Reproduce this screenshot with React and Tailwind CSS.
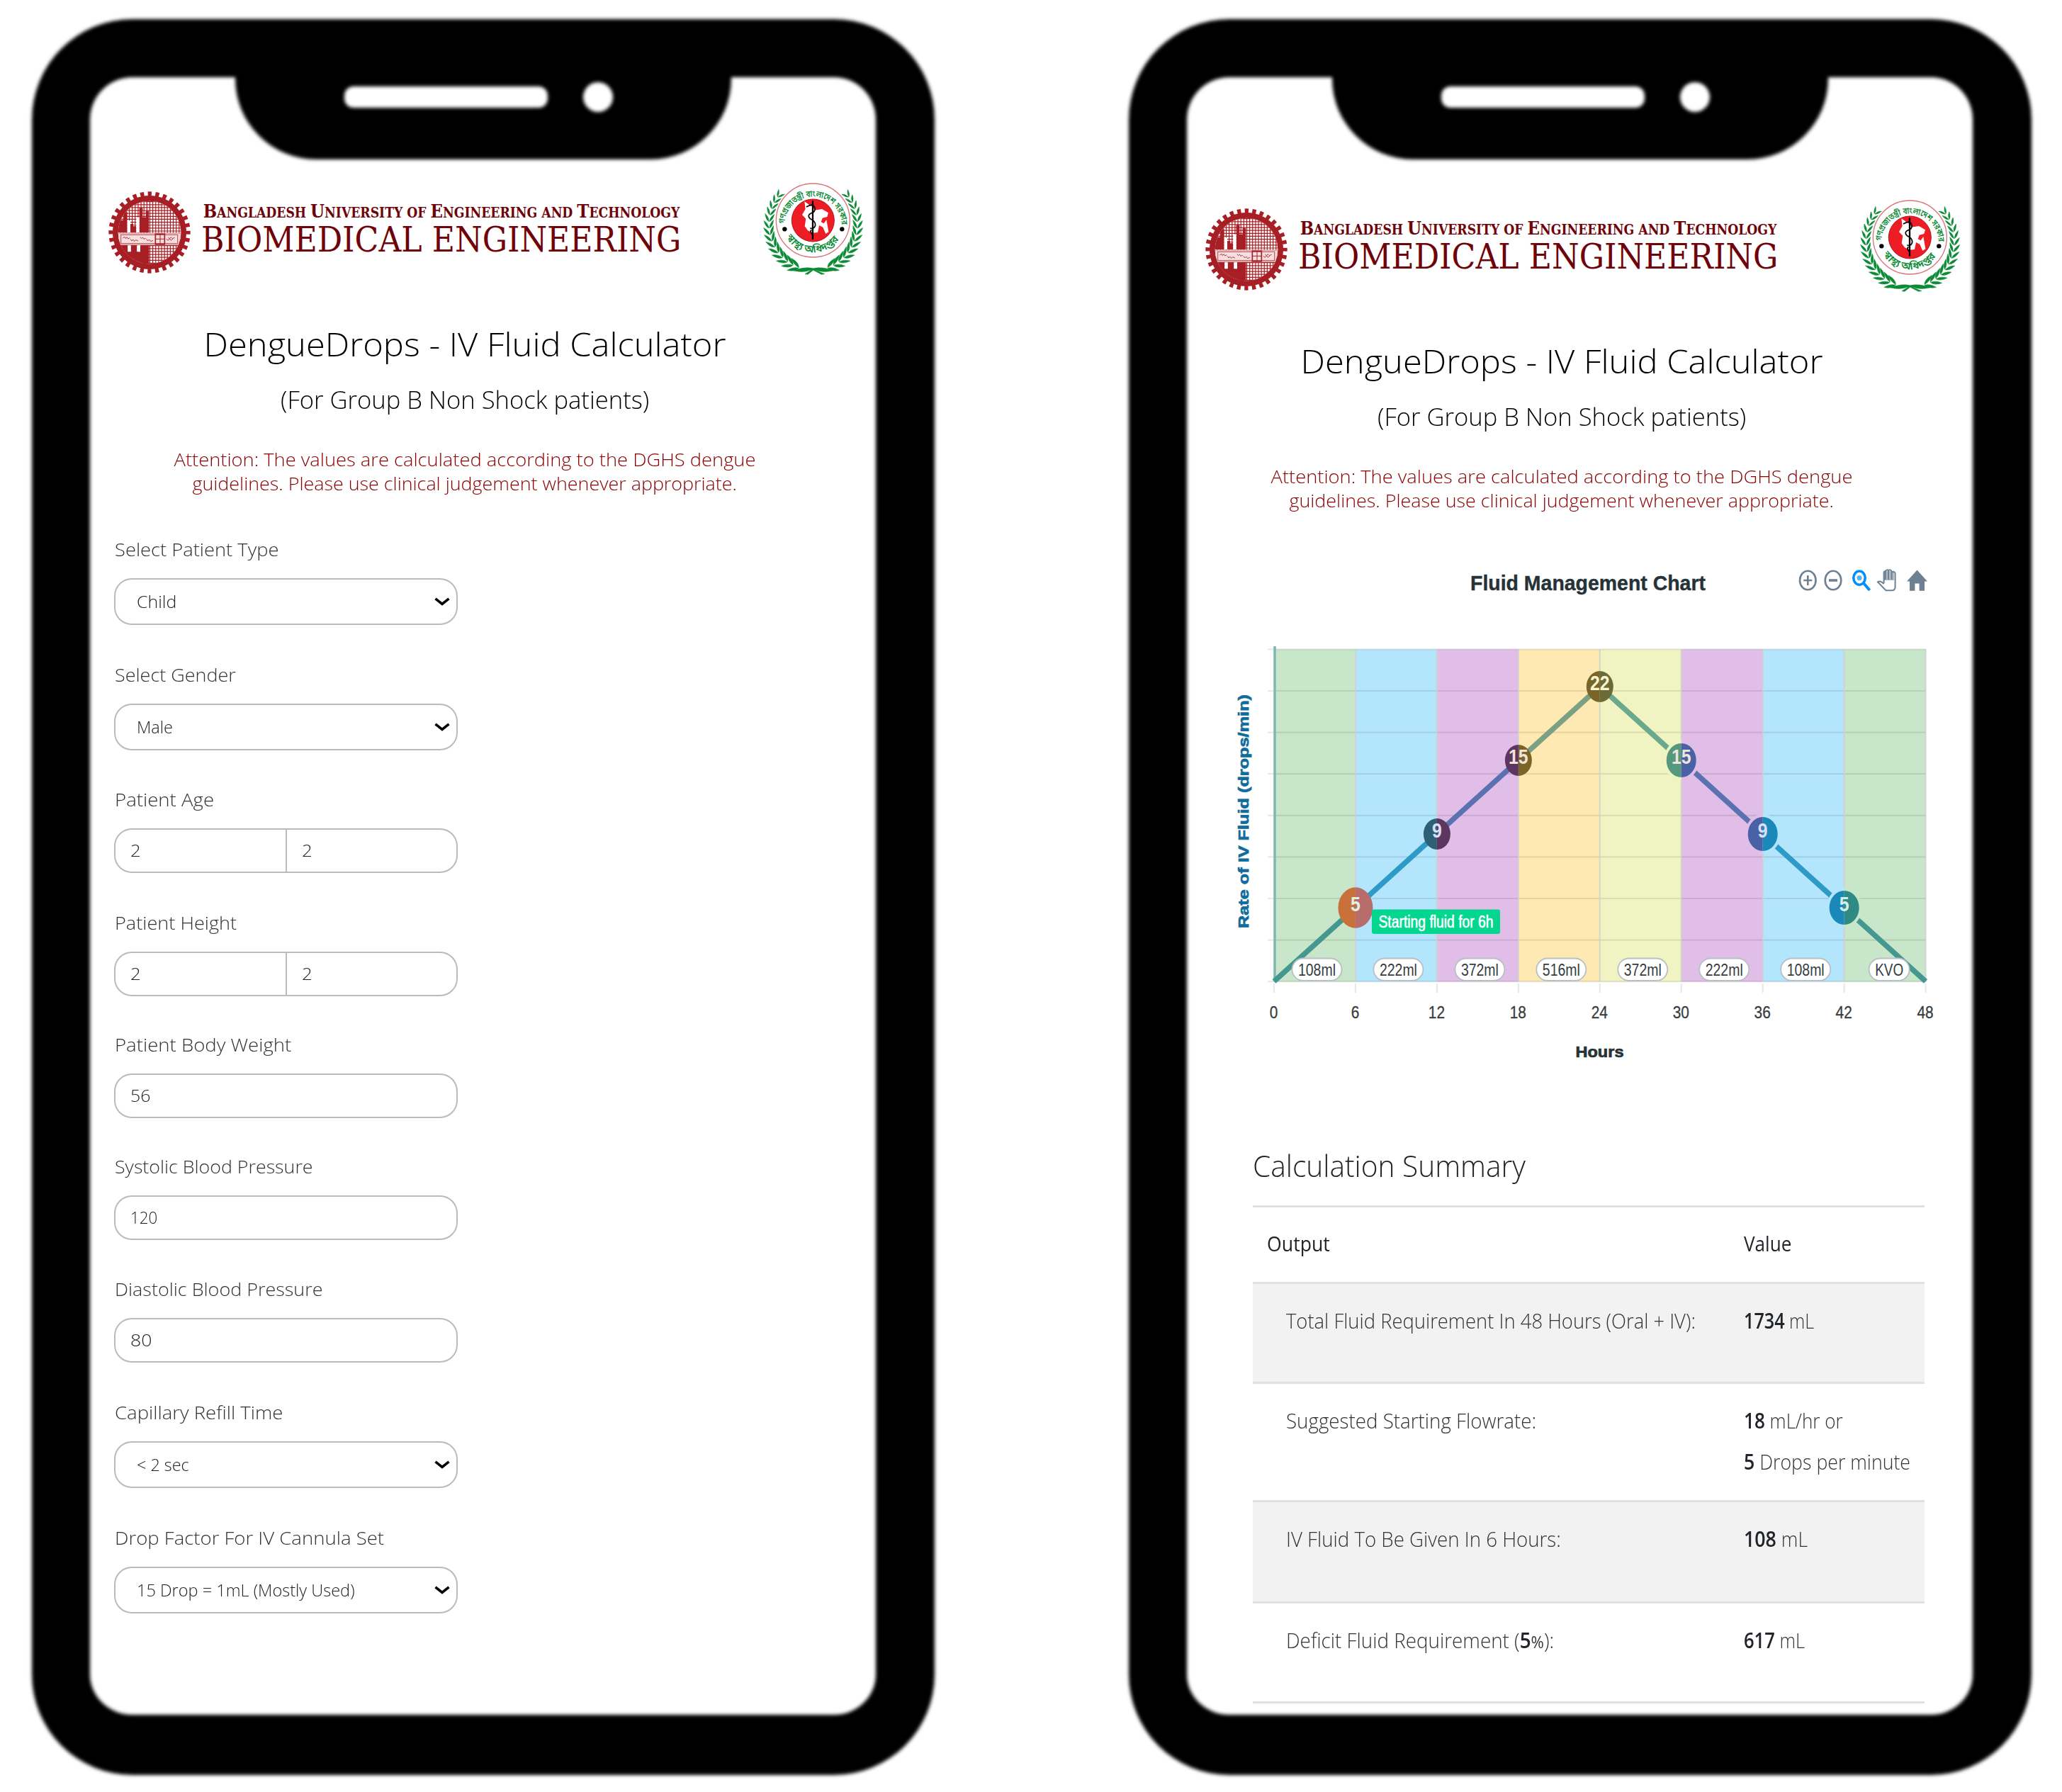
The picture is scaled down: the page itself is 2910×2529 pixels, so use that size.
import React, { useLayoutEffect, useRef, useState } from "react";

const cx = (...a) => a.filter(Boolean).join(" ");

/* Single line of text condensed or expanded to a given width. */
function Fit({ w, className, origin = "left", children }) {
  const ref = useRef(null);
  const [s, setS] = useState(1);
  useLayoutEffect(() => {
    const measure = () => ref.current && setS(w / ref.current.offsetWidth);
    measure();
    document.fonts?.ready.then(measure);
  }, [w]);
  return (
    <span
      ref={ref}
      className={cx("block w-max whitespace-nowrap", origin === "left" ? "origin-left" : "origin-center", className)}
      style={{ transform: `scaleX(${s})` }}
    >
      {children}
    </span>
  );
}

const RED = "#a81e25";

function UniversityLogo() {
  const small = { fontSize: 60 };
  const grid = [];
  for (let i = 0; i < 23; i++) {
    grid.push(<path key={"v" + i} d={`M${108 + i * 12.4} 130V400`} />);
    grid.push(<path key={"h" + i} d={`M108 ${134 + i * 12.4}H380`} />);
  }
  return (
    <svg className="block h-[160px] w-[830px] shrink-0" viewBox="45 15 2490 480">
      <defs>
        <clipPath id="gearDisc">
          <circle cx="243" cy="264" r="133" />
        </clipPath>
      </defs>
      <circle cx="243" cy="264" r="162" fill="none" stroke={RED} strokeWidth="22" pathLength="64" strokeDasharray="1 1" strokeDashoffset="0.5" />
      <circle cx="243" cy="264" r="156" fill={RED} />
      <circle cx="243" cy="264" r="133" fill="#fff" />
      <g clipPath="url(#gearDisc)">
        <g stroke={RED} strokeWidth="3.6" fill="none">{grid}</g>
        <path fill={RED} d="M100 264V212H134V178H149V264H162V228H174V238H187V264H200V160H214V200H227V173H240V264Z" />
        <path fill="#fff" d="M149 214h13v50h-13zM187 200h13v64h-13z" />
        <path fill={RED} d="M100 318H151V346H164V318H190V346H204V318H241V402H100Z" />
        <path fill="#fff" d="M151 318h13v28h-13zM190 318h14v28h-14z" />
        <rect x="105" y="266" width="276" height="52" fill="#f3d5d6" />
        <path d="M105 267H381M105 317H381" stroke="#c98083" strokeWidth="3" />
        <rect x="122" y="274" width="240" height="37" fill="#f6dfe0" stroke="#b4484d" strokeWidth="3" />
        <path
          d="M130 288l8-5 4 7 5-6 5 7 8-4M162 292l6 8 5-6 6 8 6-6 10 4M203 284l6 6 5-5 5 7 8-3M230 292l6 8 6-6 6 8 10-4M314 292l8 6 6-8 6 8 8-7M322 285l6 5 6-6 6 6 10-4"
          fill="none" stroke="#b4383e" strokeWidth="3"
        />
        <rect x="268" y="271" width="39" height="43" fill="none" stroke={RED} strokeWidth="5" />
        <path d="M288 271v43M268 292h39" stroke={RED} strokeWidth="3" />
      </g>
      <text x="470" y="200" fill="#6f0309" fontFamily="'DejaVu Serif', serif" fontWeight="700" fontSize="80" textLength="2018" lengthAdjust="spacingAndGlyphs">
        B<tspan {...small}>ANGLADESH </tspan>U<tspan {...small}>NIVERSITY OF </tspan>E<tspan {...small}>NGINEERING AND </tspan>T<tspan {...small}>ECHNOLOGY</tspan>
      </text>
      <text x="462" y="346" fill="#6f0309" fontFamily="'DejaVu Serif', serif" fontSize="146" textLength="2032" lengthAdjust="spacingAndGlyphs">
        BIOMEDICAL ENGINEERING
      </text>
    </svg>
  );
}

function HealthSeal() {
  const leaves = [];
  const n = 14;
  for (let i = 0; i < n; i++) {
    const t = i / (n - 1);
    const deg = 218 - t * 108;
    const a = (deg * Math.PI) / 180;
    const x = 262 + 186 * Math.cos(a);
    const y = 230 + 194 * Math.sin(a);
    const l = 23 + t * 16;
    leaves.push(
      <g key={i} transform={`translate(${x} ${y}) rotate(${deg - 180})`}>
        <path d={`M-1 4Q${-l * 0.55} ${-l * 0.1} ${-l * 0.7} ${-l}Q${-l * 0.1} ${-l * 0.55} -1 4Z`} />
        <path d={`M1 4Q${l * 0.55} ${-l * 0.1} ${l * 0.7} ${-l}Q${l * 0.1} ${-l * 0.55} 1 4Z`} />
      </g>
    );
  }
  return (
    <svg className="block h-[160px] w-[156px] shrink-0" viewBox="30 15 468 480">
      <defs>
        <path id="sealTop" d="M141 234A121 121 0 1 1 383 234" />
        <path id="sealBottom" d="M140 268A134 134 0 0 0 386 268" />
      </defs>
      <g fill="#0a8a35" stroke="#0a8a35" strokeWidth="1.5">
        <g>{leaves}</g>
        <g transform="translate(526 0) scale(-1 1)">{leaves}</g>
        <path d="M180 426Q225 408 263 416Q305 408 346 426Q305 436 268 422L312 440L298 442L263 424L240 442L228 440L256 422Q220 436 180 426Z" />
      </g>
      <circle cx="262" cy="213" r="156" fill="#fff" stroke="#d9757a" strokeWidth="4" />
      <circle cx="262" cy="213" r="90" fill="#ee1c25" stroke="#b5121b" strokeWidth="3" />
      <path
        fill="#fff"
        d="M226 133L247 148L262 156L268 170L300 165L327 181L322 198L302 203L296 220L308 226L319 210L328 262L316 270L304 242L288 234L282 264L262 266L240 256L227 238L232 206L216 190L230 165Z"
      />
      <path d="M261 130V294" stroke="#000" strokeWidth="7" />
      <path d="M234 156Q262 138 270 160Q274 176 252 184Q236 192 250 206Q274 216 272 234Q268 250 250 246M256 252Q246 262 262 276" fill="none" stroke="#000" strokeWidth="5" />
      <circle cx="142" cy="250" r="9.5" />
      <circle cx="385" cy="250" r="9.5" />
      <g fill="#0a8a35" fontFamily="'Noto Sans Bengali', 'Noto Sans', sans-serif" fontWeight="600">
        <text fontSize="37">
          <textPath href="#sealTop" startOffset="6" textLength="372" lengthAdjust="spacingAndGlyphs">গণপ্রজাতন্ত্রী বাংলাদেশ সরকার</textPath>
        </text>
        <text fontSize="42">
          <textPath href="#sealBottom" startOffset="20" textLength="262" lengthAdjust="spacingAndGlyphs">স্বাস্থ্য অধিদপ্তর</textPath>
        </text>
      </g>
    </svg>
  );
}

function PhoneFrame() {
  return (
    <div className="relative col-start-1 row-start-1 rounded-[142px] border-t-[82px] border-r-[83px] border-b-[85px] border-l-[82px] border-black blur-[2.5px]">
      <div className="absolute -top-1 left-[205px] flex h-[120px] w-[700px] rounded-b-[114px] bg-black pt-[17px] pl-[154px]">
        <div className="h-[30px] w-[287px] rounded-[13px] bg-white" />
        <div className="-mt-[6px] ml-[50px] size-[42px] rounded-full bg-white" />
      </div>
    </div>
  );
}

function Phone({ className, children }) {
  return (
    <section className="grid h-[2478px] w-[1274px] shrink-0 grid-cols-1 grid-rows-1">
      <PhoneFrame />
      <div className={cx("relative col-start-1 row-start-1 flex flex-col pr-[93px] pl-[100px]", className)}>
        <header className="flex items-start justify-between">
          <UniversityLogo />
          <HealthSeal />
        </header>
        <div className="mt-[50px] flex w-[1022px] flex-col items-center text-black">
          <h1 className="text-[46px] leading-[60px] font-light">
            <Fit w={737} origin="center">DengueDrops - IV Fluid Calculator</Fit>
          </h1>
          <h2 className="mt-[26px] text-[35px] leading-[46px] font-light">
            <Fit w={520} origin="center">(For Group B Non Shock patients)</Fit>
          </h2>
          <p className="mt-[44px] flex flex-col items-center text-[25px] leading-[34px] font-light text-[#8b0000]">
            <Fit w={821} origin="center">Attention: The values are calculated according to the DGHS dengue</Fit>
            <Fit w={768} origin="center">guidelines. Please use clinical judgement whenever appropriate.</Fit>
          </p>
        </div>
        {children}
      </div>
    </section>
  );
}

function Select({ text, w }) {
  return (
    <div className="flex h-[66px] w-[485px] items-center justify-between rounded-[25px] border-[2.5px] border-[#bbb] bg-white pr-[9px] pl-[30px] text-[24px] text-[#222]">
      <Fit w={w}>{text}</Fit>
      <svg className="h-[12px] w-[22px]" viewBox="0 0 22 12" fill="none" stroke="#000" strokeWidth="3.6">
        <path d="M1.5 1.8L11 9.4L20.5 1.8" />
      </svg>
    </div>
  );
}

function Inputs({ values }) {
  return (
    <div className="flex h-[63px] w-[485px] divide-x-2 divide-[#bbb] rounded-[25px] border-2 border-[#bbb] bg-white text-[24px] text-[#222]">
      {values.map(([text, w], i) => (
        <div key={i} className="flex flex-1 items-center pb-[2px] pl-[21px]">
          <Fit w={w}>{text}</Fit>
        </div>
      ))}
    </div>
  );
}

const FIELDS = [
  { label: "Select Patient Type", lw: 231, h: "h-[177px]", select: ["Child", 56] },
  { label: "Select Gender", lw: 171, h: "h-[176px]", select: ["Male", 51] },
  { label: "Patient Age", lw: 140, h: "h-[174px]", values: [["2", 15], ["2", 15]] },
  { label: "Patient Height", lw: 172, h: "h-[172px]", values: [["2", 15], ["2", 15]] },
  { label: "Patient Body Weight", lw: 249, h: "h-[172px]", values: [["56", 28]] },
  { label: "Systolic Blood Pressure", lw: 280, h: "h-[173px]", values: [["120", 38]] },
  { label: "Diastolic Blood Pressure", lw: 293, h: "h-[174px]", values: [["80", 30]] },
  { label: "Capillary Refill Time", lw: 237, h: "h-[177px]", select: ["< 2 sec", 74] },
  { label: "Drop Factor For IV Cannula Set", lw: 380, h: "h-[140px]", select: ["15 Drop = 1mL (Mostly Used)", 308] },
];

function PatientForm() {
  return (
    <form className="mt-[58px] ml-[16px] flex flex-col font-light">
      {FIELDS.map((f) => (
        <div key={f.label} className={f.h}>
          <label className="block h-[59px] pl-px text-[26px] leading-[36px] text-[#333]">
            <Fit w={f.lw}>{f.label}</Fit>
          </label>
          {f.select ? <Select text={f.select[0]} w={f.select[1]} /> : <Inputs values={f.values} />}
        </div>
      ))}
    </form>
  );
}

const X0 = 1798;
const STEP = 114.95;
/* band colour, line colour over the band, volume label */
const BANDS = [
  ["#c8e6c9", "#45988f", "108ml"],
  ["#b3e5fc", "#2e9ac6", "222ml"],
  ["#e1bee7", "#5c72b0", "372ml"],
  ["#ffe9b3", "#7ba084", "516ml"],
  ["#f0f4c3", "#6aa98c", "372ml"],
  ["#e1bee7", "#5c72b0", "222ml"],
  ["#b3e5fc", "#2e9ac6", "108ml"],
  ["#c8e6c9", "#45988f", "KVO"],
];
const YS = [1385, 1281, 1177, 1073, 969, 1073, 1177, 1281, 1385];
/* label, left half, right half, radii, label colour */
const MARKS = [
  ["5", "#c9713a", "#b86d6d", 24.5, 28.8, "#e3efe0"],
  ["9", "#2f5f74", "#5c3660", 19, 22, "#d6e0f6"],
  ["15", "#5c3660", "#7a6428", 19, 22, "#f4e2d6"],
  ["22", "#7a6428", "#6b6b38", 19, 22, "#fbf5d2"],
  ["15", "#55987e", "#4a62a5", 21, 24, "#eee4dc"],
  ["9", "#4a62a5", "#1a88b8", 21, 24, "#d6e0f6"],
  ["5", "#1a88b8", "#2f8a83", 21, 24, "#d6efe6"],
];

function FluidChart() {
  return (
    <svg className="mt-[57px] ml-[27px] block h-[740px] w-[1040px] shrink-0" viewBox="1720 780 1040 740" fontFamily="'Liberation Sans', Arial, sans-serif">
      <text x="2075" y="833" fontSize="30" fontWeight="700" fill="#263238" stroke="#263238" strokeWidth="0.4" textLength="332" lengthAdjust="spacingAndGlyphs">Fluid Management Chart</text>

      <g fill="none" stroke="#6e8192" strokeWidth="2.6">
        <ellipse cx="2551.3" cy="819" rx="11.3" ry="13.2" />
        <path d="M2545.3 819h12M2551.3 812v14" />
        <ellipse cx="2587" cy="819" rx="11.3" ry="13.2" />
        <path d="M2581 819h12" strokeWidth="3.6" />
      </g>
      <g fill="none" stroke="#008ffb">
        <ellipse cx="2624" cy="815.6" rx="8.2" ry="9.6" strokeWidth="3.6" />
        <path d="M2630 823L2638.6 833" strokeWidth="4" />
        <circle cx="2624" cy="815.6" r="3.6" fill="#5bb4f8" stroke="none" />
      </g>
      <path
        d="M2658.6 823V807.6Q2659 805.6 2660.8 806.5V818M2660.8 806.5Q2662.4 803 2665 805V818M2665 805Q2668.6 803 2669.6 806.4V818M2669.6 807.4Q2673.4 805.6 2674.6 809V829Q2674 833.2 2670 833.2H2661.5L2650 821.4Q2653.5 818.6 2658.6 824"
        fill="none" stroke="#6e8192" strokeWidth="2"
      />
      <path d="M2659 806h14v13h-14z" fill="#6e8192" opacity="0.55" />
      <path d="M2705.5 804.5L2720 820.5H2716V833.8H2708.6V823.6H2702.4V833.8H2695V820.5H2691Z" fill="#6e8192" />

      {BANDS.map(([bg], i) => (
        <rect key={i} x={X0 + i * STEP} y="916.4" width={STEP + 0.3} height="469" fill={bg} />
      ))}
      <g stroke="#000" strokeOpacity="0.09" strokeWidth="2.2">
        {[0, 1, 2, 3, 4, 5, 6, 7, 8].map((i) => (
          <path key={i} d={`M1789 ${916.4 + i * 58.6}H2718`} />
        ))}
        {[0, 1, 2, 3, 4, 5, 6, 7, 8].map((i) => (
          <path key={i} d={`M${X0 + i * STEP} 1388V1401`} />
        ))}
      </g>
      <path d="M1799 912V1385" stroke="#7fb8ae" strokeWidth="3.5" />
      <g stroke="#cfcfcf" strokeOpacity="0.75" strokeWidth="2.2">
        {[1, 2, 3, 4, 5, 6, 7, 8].map((i) => (
          <path key={i} d={`M${X0 + i * STEP} 916V1386`} />
        ))}
      </g>

      {BANDS.map(([, line], i) => (
        <path key={i} d={`M${X0 + i * STEP} ${YS[i]}L${X0 + (i + 1) * STEP} ${YS[i + 1]}`} stroke={line} strokeWidth="7.5" strokeLinecap="butt" />
      ))}
      {MARKS.map(([t, l, r, rx, ry, color], i) => {
        const x = X0 + (i + 1) * STEP;
        const y = YS[i + 1];
        const hx = rx + 4;
        const hy = ry + 4;
        return (
          <g key={i}>
            {i > 3 && (
              <>
                <path d={`M${x} ${y - hy}A${hx} ${hy} 0 0 0 ${x} ${y + hy}Z`} fill={BANDS[i][0]} />
                <path d={`M${x} ${y - hy}A${hx} ${hy} 0 0 1 ${x} ${y + hy}Z`} fill={BANDS[i + 1][0]} />
              </>
            )}
            <path d={`M${x} ${y - ry}A${rx} ${ry} 0 0 0 ${x} ${y + ry}Z`} fill={l} />
            <path d={`M${x} ${y - ry}A${rx} ${ry} 0 0 1 ${x} ${y + ry}Z`} fill={r} />
            <text
              x={x - t.length * 6.9} y={y + 5}
              fontSize="29" fontWeight="700" fill={color} textLength={t.length * 13.8} lengthAdjust="spacingAndGlyphs"
            >
              {t}
            </text>
          </g>
        );
      })}

      {BANDS.map(([, , t], i) => {
        const kvo = t === "KVO";
        const c = X0 + (i + 0.5) * STEP + (kvo ? 6 : 3);
        const w = kvo ? 57 : 70;
        return (
          <g key={i}>
            <rect x={c - w / 2} y="1352.5" width={w} height="31.5" rx="15.7" fill="#fff" stroke="#b9c0c4" strokeWidth="1.8" />
            <text x={c - (w - 17) / 2} y="1376.5" fontSize="24" fill="#373d3f" textLength={w - 17} lengthAdjust="spacingAndGlyphs">{t}</text>
          </g>
        );
      })}

      <rect x="1936" y="1283.5" width="181" height="34.5" rx="3" fill="#03d68f" />
      <text x="1945.5" y="1309" fontSize="23.5" fill="#fff" stroke="#fff" strokeWidth="0.6" textLength="162" lengthAdjust="spacingAndGlyphs">Starting fluid for 6h</text>

      {[0, 6, 12, 18, 24, 30, 36, 42, 48].map((v, i) => {
        const w = String(v).length * 11.6;
        return (
          <text key={v} x={X0 - 0.5 + i * STEP - w / 2} y="1436.5" fontSize="24" fill="#373d3f" stroke="#373d3f" strokeWidth="0.3" textLength={w} lengthAdjust="spacingAndGlyphs">{v}</text>
        );
      })}
      <text x="2223.5" y="1492" fontSize="22" fontWeight="700" fill="#263238" stroke="#263238" strokeWidth="0.7" textLength="68" lengthAdjust="spacingAndGlyphs">Hours</text>
      <text transform="translate(1762 1310) rotate(-90)" fontSize="21" fontWeight="700" fill="#0f6c9c" stroke="#0f6c9c" strokeWidth="0.7" textLength="330" lengthAdjust="spacingAndGlyphs">Rate of IV Fluid (drops/min)</text>
    </svg>
  );
}

const B = ({ children }) => <b className="font-semibold text-[#212529]">{children}</b>;

const ROWS = [
  { h: "h-[141px]", label: "Total Fluid Requirement In 48 Hours (Oral + IV):", lw: 578, values: [[<><B>1734</B> mL</>, 99]] },
  { h: "h-[167px]", label: "Suggested Starting Flowrate:", lw: 353, values: [[<><B>18</B> mL/hr or</>, 140], [<><B>5</B> Drops per minute</>, 235]] },
  { h: "h-[143px]", label: "IV Fluid To Be Given In 6 Hours:", lw: 388, values: [[<><B>108</B> mL</>, 90]] },
  { h: "h-[141px]", label: <>Deficit Fluid Requirement (<B>5</B><span className="text-[24px] font-normal">%</span>):</>, lw: 378, values: [[<><B>617</B> mL</>, 86]] },
];

function Summary() {
  return (
    <div className="mt-[97px] ml-[75px] w-[948px]">
      <h3 className="mb-[28px] text-[42px] leading-[56px] font-light text-[#212529]">
        <Fit w={385}>Calculation Summary</Fit>
      </h3>
      <div className="flex h-[111px] border-y-[3px] border-[#dee2e6] pt-[31px] pl-[20px] text-[30px] leading-[40px] font-medium text-[#212529]">
        <div className="w-[673px]"><Fit w={89}>Output</Fit></div>
        <Fit w={67}>Value</Fit>
      </div>
      {ROWS.map((r, i) => (
        <div
          key={i}
          className={cx(
            "flex border-b-[3px] border-[#dee2e6] pt-[23px] pl-[47px] text-[30px] leading-[58px] font-light text-[#333]",
            r.h,
            i % 2 === 0 && "bg-[#f2f2f2]"
          )}
        >
          <div className="w-[646px] shrink-0"><Fit w={r.lw}>{r.label}</Fit></div>
          <div>
            {r.values.map(([v, w], j) => (
              <Fit key={j} w={w}>{v}</Fit>
            ))}
          </div>
        </div>
      ))}
    </div>
  );
}

export default function App() {
  return (
    <main className="flex h-[2529px] w-[2910px] items-start gap-[274px] overflow-hidden bg-white pt-[27px] pl-[45px] font-['Open_Sans',sans-serif]">
      <Phone className="pt-[218px]">
        <PatientForm />
      </Phone>
      <Phone className="pt-[242px]">
        <FluidChart />
        <Summary />
      </Phone>
    </main>
  );
}
